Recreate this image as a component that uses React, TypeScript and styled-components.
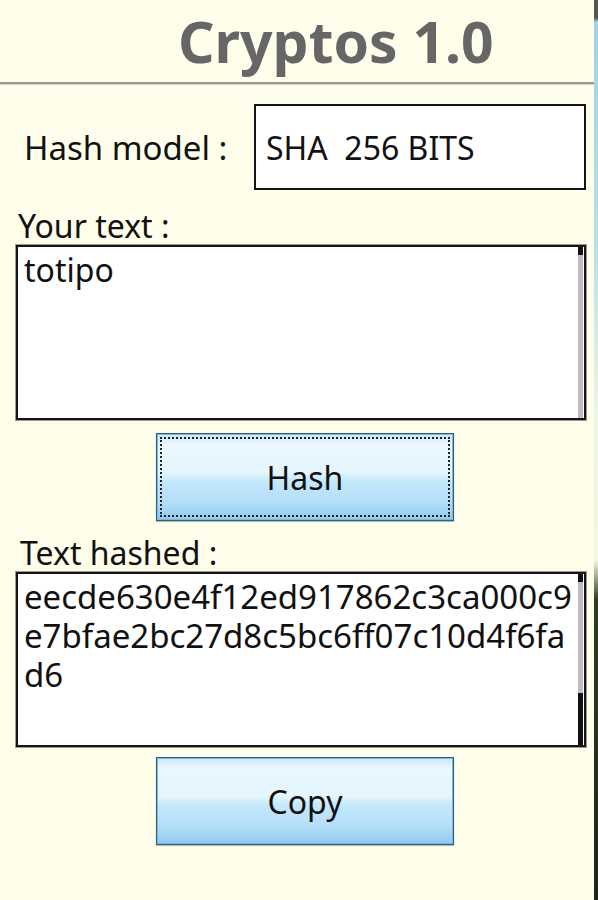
import React from "react"
import styled, { createGlobalStyle } from "styled-components"

const GlobalStyle = createGlobalStyle`
    html, body {
        margin: 0;
        padding: 0;
        background: #fffeea;
    }
    body {
        font-family: "Noto Sans", "Open Sans", sans-serif;
        color: #111;
    }
`;

const Screen = styled.div`
    display: flex;
    width: 598px;
    height: 900px;
    overflow: hidden;
    background: #fffeea;
`;

const Main = styled.div`
    flex: 1;
    display: flex;
    flex-direction: column;
`;

const Edge = styled.div`
    width: 4px;
    background: linear-gradient(
        to bottom,
        #555 0,
        #555 18px,
        #9fd3e6 22px,
        #b9e2ea 260px,
        #eef6e4 420px,
        #f4f6e0 560px,
        #2f3a22 600px,
        #1e2616 900px
    );
`;

const Header = styled.header`
    height: 82px;
    display: flex;
    align-items: center;
    padding-left: 178px;
    border-bottom: 2px solid #9a9a92;
    box-shadow: 0 1px 0 #d8d8cc;
`;

const Title = styled.h1`
    margin: 0;
    font-family: "Noto Sans", "Open Sans", sans-serif;
    font-weight: 700;
    font-size: 57px;
    line-height: 1;
    color: #666666;
`;

const Form = styled.form`
    display: flex;
    flex-direction: column;
    padding: 20px 8px 0 16px;
`;

const ModelRow = styled.div`
    display: flex;
    align-items: center;
    height: 86px;
`;

const ModelLabel = styled.span`
    font-size: 33px;
    padding-left: 8px;
    flex: 0 0 230px;
`;

const ModelSelect = styled.div`
    flex: 1;
    height: 100%;
    box-sizing: border-box;
    border: 2px solid #151515;
    background: #fff;
    display: flex;
    align-items: center;
    padding-left: 10px;
    font-size: 32px;
    white-space: pre;
`;

const FieldLabel = styled.label<{ $top: number; $indent?: number }>`
    display: block;
    font-size: 32px;
    line-height: 38px;
    margin-top: ${(p) => p.$top}px;
    padding-left: ${(p) => p.$indent ?? 2}px;
`;

const TextBox = styled.div`
    display: flex;
    height: 175px;
    box-sizing: border-box;
    border: 2px solid #151515;
    box-shadow: 0 0 0 1px #9a9a92;
    background: #fff;
`;

const TextContent = styled.div<{ $size?: number }>`
    flex: 1;
    padding: 3px 6px;
    font-size: ${(p) => p.$size ?? 32}px;
    line-height: 39px;
    word-break: break-all;
`;

const ScrollTrack = styled.div`
    width: 5px;
    margin-right: 1px;
    display: flex;
    flex-direction: column;
    background: #bdbbc0;
`;

const ScrollPart = styled.div<{ $size: number }>`
    height: ${(p) => p.$size}px;
    background: #111;
`;

const Spacer = styled.div`
    flex: 1;
`;

const Button = styled.button<{ $focused?: boolean; $top: number }>`
    align-self: center;
    margin: ${(p) => p.$top}px 0 0 8px;
    width: 298px;
    height: 88px;
    font-family: "Noto Sans", "Open Sans", sans-serif;
    font-size: 32px;
    color: #111;
    border: 1px solid #2a5e86;
    box-shadow: inset 0 0 0 1px #7fb6da, 0 1px 1px rgba(0, 0, 0, 0.25);
    background: linear-gradient(
        to bottom,
        #c9e6f8 0%,
        #eaf7fe 12%,
        #e4f5fe 45%,
        #c4e8fc 55%,
        #b3def8 80%,
        #8ec9ee 100%
    );
    outline: ${(p) => (p.$focused ? "2px dotted #222" : "none")};
    outline-offset: -6px;
    padding: 0;
    cursor: pointer;
`;

const App = () => {
    return (
        <>
            <GlobalStyle />
            <Screen>
                <Main>
                    <Header>
                        <Title>Cryptos 1.0</Title>
                    </Header>
                    <Form onSubmit={(e) => e.preventDefault()}>
                        <ModelRow>
                            <ModelLabel>Hash model :</ModelLabel>
                            <ModelSelect>SHA  256 BITS</ModelSelect>
                        </ModelRow>
                        <FieldLabel $top={17}>Your text :</FieldLabel>
                        <TextBox>
                            <TextContent>totipo</TextContent>
                            <ScrollTrack>
                                <ScrollPart $size={8} />
                            </ScrollTrack>
                        </TextBox>
                        <Button type="button" $focused $top={13}>
                            Hash
                        </Button>
                        <FieldLabel $top={13} $indent={4}>Text hashed :</FieldLabel>
                        <TextBox>
                            <TextContent $size={33}>
                                eecde630e4f12ed917862c3ca000c9e7bfae2bc27d8c5bc6ff07c10d4f6fad6
                            </TextContent>
                            <ScrollTrack>
                                <ScrollPart $size={8} />
                                <Spacer />
                                <ScrollPart $size={52} />
                            </ScrollTrack>
                        </TextBox>
                        <Button type="button" $top={10}>
                            Copy
                        </Button>
                    </Form>
                </Main>
                <Edge />
            </Screen>
        </>
    )
}

export default App;
